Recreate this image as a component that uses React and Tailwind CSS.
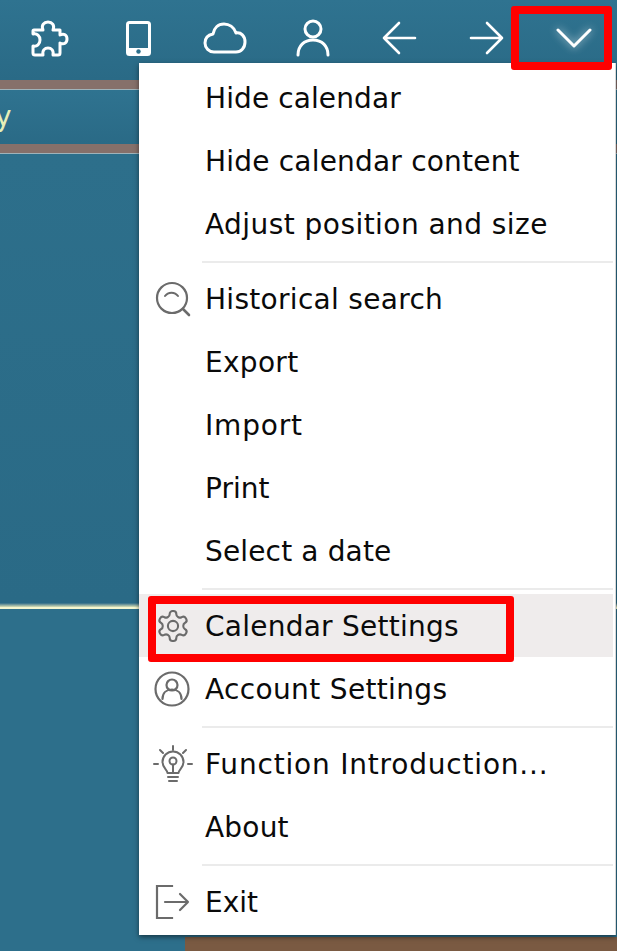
import React from 'react';

const IconPuzzle = () => (
    <svg width="38" height="37" viewBox="0 0 38 37" fill="none" stroke="white" strokeWidth="3" strokeLinejoin="round">
        <path d="M3 10H12C10 5 13 2 17 2C21 2 24 5 22 10H29V15C33 13 36 15 36 19C36 23 33 25 29 23V33Q29 35 27 35H22C23 30 20 28 17 28C14 28 11 30 12 35H4Q2 35 2 33V26C6 27 9 24 9 20C9 16 6 13 2 14V11Q2 10 3 10Z" />
    </svg>
);

const IconPhone = () => (
    <svg width="25" height="35" viewBox="0 0 25 35" fill="none">
        <rect x="1.500" y="1.500" width="22" height="32" rx="2" stroke="white" strokeWidth="3" />
        <rect x="1" y="27" width="23" height="7" fill="white" />
        <circle cx="12.500" cy="30.500" r="2.200" fill="#2d6f8b" />
    </svg>
);

const IconCloud = () => (
    <svg width="44" height="32" viewBox="0 0 44 32" fill="none" stroke="white" strokeWidth="3" strokeLinejoin="round">
        <path d="M11 30H33C38 30 42 26 42 20C42 14 38 10 33 11C31 5 26 2 21 2C15 2 11 6 10 12C5 13 2 16 2 21C2 26 6 30 11 30Z" />
    </svg>
);

const IconUser = () => (
    <svg width="34" height="38" viewBox="0 0 34 38" fill="none" stroke="white" strokeWidth="3" strokeLinecap="round">
        <circle cx="17" cy="10" r="8" />
        <path d="M2 36c0-9 6-15 15-15s15 6 15 15" />
    </svg>
);

const IconBack = () => (
    <svg width="35" height="34" viewBox="0 0 35 34" fill="none" stroke="white" strokeWidth="2.600" strokeLinecap="round" strokeLinejoin="round">
        <path d="M33 17H2M17 2L2 17l15 15" />
    </svg>
);

const IconForward = () => (
    <svg width="35" height="34" viewBox="0 0 35 34" fill="none" stroke="white" strokeWidth="2.600" strokeLinecap="round" strokeLinejoin="round">
        <path d="M2 17h31M18 2l15 15-15 15" />
    </svg>
);

const IconChevron = () => (
    <svg width="36" height="20" viewBox="0 0 36 20" fill="none" stroke="white" strokeWidth="3" strokeLinecap="round" strokeLinejoin="round" className="drop-shadow-[0_0_4px_rgba(255,255,255,0.7)]">
        <path d="M2 2l16 16L34 2" />
    </svg>
);

const IconSearch = () => (
    <svg width="36" height="36" viewBox="0 0 36 36" fill="none" stroke="#6b6b6b" strokeWidth="2.2" strokeLinecap="round">
        <circle cx="17" cy="17" r="15" />
        <path d="M10 15c3-4.500 10-4.500 13 0" strokeWidth="2" />
        <path d="M28 28l6 6" strokeWidth="2.600" />
    </svg>
);

const IconGear = () => (
    <svg width="36" height="36" viewBox="0 0 24 24" fill="none" stroke="#6b6b6b" strokeWidth="1.4" strokeLinecap="round" strokeLinejoin="round">
        <path d="M12.220 2h-.44a2 2 0 0 0-2 2v.18a2 2 0 0 1-1 1.730l-.43.25a2 2 0 0 1-2 0l-.15-.08a2 2 0 0 0-2.730.73l-.22.38a2 2 0 0 0 .73 2.730l.15.1a2 2 0 0 1 1 1.720v.51a2 2 0 0 1-1 1.740l-.15.09a2 2 0 0 0-.73 2.730l.22.38a2 2 0 0 0 2.730.73l.15-.08a2 2 0 0 1 2 0l.43.25a2 2 0 0 1 1 1.730V20a2 2 0 0 0 2 2h.44a2 2 0 0 0 2-2v-.18a2 2 0 0 1 1-1.730l.43-.25a2 2 0 0 1 2 0l.15.08a2 2 0 0 0 2.730-.73l.22-.39a2 2 0 0 0-.73-2.730l-.15-.08a2 2 0 0 1-1-1.740v-.5a2 2 0 0 1 1-1.740l.15-.09a2 2 0 0 0 .73-2.730l-.22-.38a2 2 0 0 0-2.730-.73l-.15.08a2 2 0 0 1-2 0l-.43-.25a2 2 0 0 1-1-1.730V4a2 2 0 0 0-2-2z" />
        <circle cx="12" cy="12" r="3.400" />
    </svg>
);

const IconAccount = () => (
    <svg width="36" height="36" viewBox="0 0 36 36" fill="none" stroke="#6b6b6b" strokeWidth="2.2" strokeLinecap="round" className="-ml-[2px]">
        <circle cx="18" cy="18" r="16.500" />
        <circle cx="18" cy="14" r="5.500" />
        <path d="M8.500 28c0-6 4-9.500 9.500-9.500s9.500 3.500 9.500 9.500" />
    </svg>
);

const IconBulb = () => (
    <svg width="40" height="40" viewBox="0 0 40 40" fill="none" stroke="#6b6b6b" strokeWidth="2" strokeLinecap="round" strokeLinejoin="round">
        <path d="M20 2v4M7 6l3 3M33 6l-3 3M1 20h4M35 20h4" />
        <path d="M14.500 29c0-3-5-5-5-11a10.500 10.500 0 0 1 21 0c0 6-5 8-5 11z" />
        <circle cx="20" cy="17" r="3.500" />
        <path d="M20 20.500V29M15 33h10M16 37h8" />
    </svg>
);

const IconExit = () => (
    <svg width="36" height="36" viewBox="0 0 36 36" fill="none" stroke="#6b6b6b" strokeWidth="2.2" strokeLinecap="square">
        <path d="M17 2H2v32h15" />
        <path d="M10 18h23M25 10l8 8-8 8" strokeLinecap="round" strokeLinejoin="round" />
    </svg>
);

const menuGroups = [
    [
        { label: 'Hide calendar', track: 'tracking-[0.1px]' },
        { label: 'Hide calendar content', track: 'tracking-[0.2px]' },
        { label: 'Adjust position and size', track: 'tracking-[0.45px]' },
    ],
    [
        { label: 'Historical search', icon: <IconSearch />, track: 'tracking-[0.3px]' },
        { label: 'Export', track: 'tracking-[0.3px]' },
        { label: 'Import', track: 'tracking-[0.8px]' },
        { label: 'Print' },
        { label: 'Select a date', track: 'tracking-[0.15px]' },
    ],
    [
        { label: 'Calendar Settings', icon: <IconGear />, active: true, track: 'tracking-[0.24px]' },
        { label: 'Account Settings', icon: <IconAccount />, track: 'tracking-[0.35px]' },
    ],
    [
        { label: 'Function Introduction...', icon: <IconBulb />, track: 'tracking-[0.8px]' },
        { label: 'About', track: 'tracking-[0.2px]' },
    ],
    [{ label: 'Exit', icon: <IconExit /> }],
];

const MenuRow = ({ item }) => (
    <div className={`flex h-[63px] items-center ${item.active ? 'bg-[#efecec]' : ''}`}>
        <div className="flex w-[66px] shrink-0 items-center justify-center pl-[1px]">{item.icon}</div>
        <span className={`whitespace-nowrap pt-[2px] text-[28px] text-[#0a0a0a] ${item.track || ''}`}>{item.label}</span>
    </div>
);

const App = () => {
    return (
        <div className="relative h-[951px] w-[617px] overflow-hidden bg-[#2d6f8b] font-['Tahoma','DejaVu_Sans',sans-serif]">
            <div className="flex h-[80px] items-center gap-[52px] bg-gradient-to-b from-[#2f7390] to-[#2a6a86] pb-[4px] pl-[31px]">
                <IconPuzzle />
                <div className="ml-[5px]"><IconPhone /></div>
                <IconCloud />
                <div className="-ml-[3px]"><IconUser /></div>
                <IconBack />
                <IconForward />
                <IconChevron />
            </div>
            <div className="h-[10px] border-b border-[#9fb3ba] bg-[#86706a]" />
            <div className="flex h-[54px] items-center bg-gradient-to-b from-[#2f7390] to-[#2a6a86] text-[28px] text-[#e6efb8]">
                <span className="-ml-[5px]">y</span>
            </div>
            <div className="h-[10px] border-b border-[#9fb3ba] bg-[#86706a]" />
            <div className="h-[449px] bg-gradient-to-b from-[#2d6f8b] to-[#2a6a86]" />
            <div className="h-[4px] bg-gradient-to-b from-[#2a6a86] to-[#d8e0b4]" />
            <div className="h-[2px] bg-[#f4f6cf]" />
            <div className="h-[328px]" />
            <div className="ml-[185px] h-[14px] bg-[#7a5a42]" />

            {/* dropdown menu */}
            <div className="absolute left-[139px] top-[63px] h-[872px] w-[477px] border-r border-[#d8d8d8] bg-white pr-[2px] pt-[3px] shadow-[0_2px_5px_rgba(0,0,0,0.5)]">
                {menuGroups.map((group, i) => (
                    <div key={i}>
                        {i > 0 && <div className="mb-[4px] ml-[63px] mt-[6px] h-[2px] bg-[#ebebeb]" />}
                        {group.map(item => <MenuRow key={item.label} item={item} />)}
                    </div>
                ))}
            </div>

            {/* red annotation boxes */}
            <div className="absolute left-[511px] top-[6px] h-[64px] w-[101px] rounded-[3px] border-[8px] border-[#ff0000]" />
            <div className="absolute left-[148px] top-[596px] h-[66px] w-[366px] rounded-[3px] border-[8px] border-[#ff0000]" />
        </div>
    );
};
export default App;
